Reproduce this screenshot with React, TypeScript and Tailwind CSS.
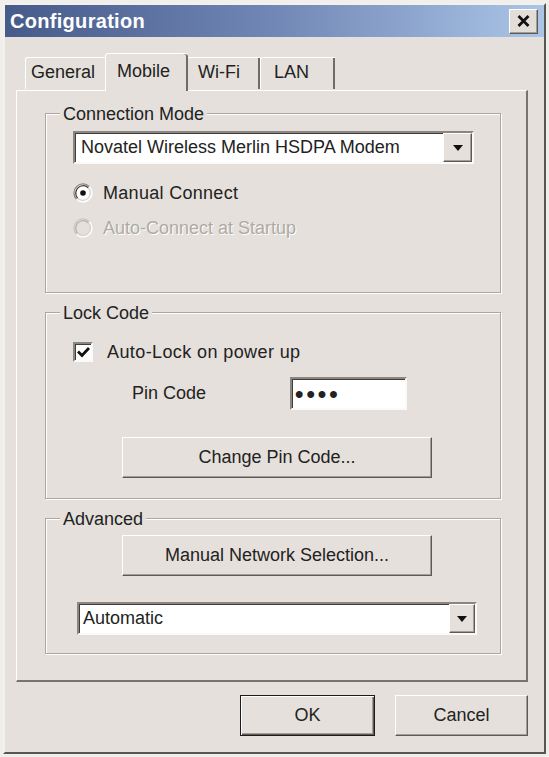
import { ReactNode } from "react";

const raised =
  "border border-t-white border-l-white border-r-[#5d5a55] border-b-[#5d5a55] shadow-[inset_-1px_-1px_0_#a29e97]";
const sunken =
  "border-2 border-t-[#8b8680] border-l-[#8b8680] border-r-[#fbfaf9] border-b-[#fbfaf9] shadow-[inset_1px_1px_0_#403e3b] bg-white";

function DropArrow() {
  return (
    <svg width="10" height="6" viewBox="0 0 10 6">
      <polygon points="0,0 10,0 5,6" fill="#111" />
    </svg>
  );
}

function Combo({ value, width, textPad, btnWidth }: { value: string; width: string; textPad: string; btnWidth: string }) {
  return (
    <div className={`${sunken} ${width} h-[33px] flex items-center`}>
      <span className={`flex-1 ${textPad} whitespace-nowrap`}>{value}</span>
      <span className={`${raised} ${btnWidth} h-full flex items-center justify-center bg-[#e5e0db]`}>
        <DropArrow />
      </span>
    </div>
  );
}

function Radio({ checked, disabled }: { checked?: boolean; disabled?: boolean }) {
  const outer = disabled ? "#c9c5bf" : "#8b8680";
  const inner = disabled ? "#b5b1ab" : "#403e3b";
  return (
    <svg width="20" height="20" viewBox="0 0 20 20">
      <circle cx="10" cy="10" r="8.5" fill={disabled ? "#e5e0db" : "#fff"} />
      <path d="M3.6 16.4 A9 9 0 0 1 16.4 3.6" fill="none" stroke={outer} strokeWidth="1.3" />
      <path d="M4.7 15.3 A7.5 7.5 0 0 1 15.3 4.7" fill="none" stroke={inner} strokeWidth="1.3" />
      <path d="M16.4 3.6 A9 9 0 0 1 3.6 16.4" fill="none" stroke="#fff" strokeWidth="1.3" />
      <path d="M15.3 4.7 A7.5 7.5 0 0 1 4.7 15.3" fill="none" stroke="#d8d3cd" strokeWidth="1.3" />
      {checked && <circle cx="10" cy="10" r="2.8" fill="#111" />}
    </svg>
  );
}

function Checkbox() {
  return (
    <span className={`${sunken} w-[20px] h-[20px] flex items-center justify-center`}>
      <svg width="13" height="12" viewBox="0 0 13 12">
        <path d="M1 5.5 L5 9.5 L12 2" fill="none" stroke="#111" strokeWidth="2.8" />
      </svg>
    </span>
  );
}

function Group({ title, height, top, children }: { title: string; height: string; top: string; children: ReactNode }) {
  return (
    <div
      className={`relative ml-[28px] ${top} w-[456px] ${height} border border-[#aba69e] shadow-[inset_1px_1px_0_#fff,1px_1px_0_#fff] flex flex-col`}
    >
      <span className="absolute left-[14px] -top-[11px] px-[3px] bg-[#e5e0db] leading-[22px]">{title}</span>
      {children}
    </div>
  );
}

function Button({ label, width, isDefault }: { label: string; width: string; isDefault?: boolean }) {
  return (
    <div
      className={`${width} h-[41px] flex items-center justify-center bg-[#e5e0db] ${
        isDefault
          ? "border border-[#1c1c1c] shadow-[inset_1px_1px_0_#fff,inset_-1px_-1px_0_#5d5a55,inset_-2px_-2px_0_#a29e97]"
          : raised
      }`}
    >
      {label}
    </div>
  );
}

export default function App() {
  return (
    <div className="w-[549px] h-[757px] bg-[#f1efec] pt-[3px] pl-[3px] font-['Liberation_Sans',Arial,sans-serif] text-[18px] text-[#222]">
      <div className="w-[543px] h-[751px] flex flex-col bg-[#e5e0db] border-2 border-t-[#f3f1ee] border-l-[#f3f1ee] border-r-[#5a5753] border-b-[#5a5753]">
        {/* Title bar */}
        <div className="h-[32px] flex items-center justify-between bg-linear-to-r from-[#475b8a] via-[#7187b5] to-[#abc5e7]">
          <span className="pl-[5px] text-white font-bold text-[20px] tracking-[0.3px]">Configuration</span>
          <span className={`${raised} mr-[6px] w-[29px] h-[25px] flex items-center justify-center bg-[#e2ddd7]`}>
            <svg width="13" height="12" viewBox="0 0 13 12">
              <path d="M1.5 1 L11.5 11 M11.5 1 L1.5 11" stroke="#111" strokeWidth="2.8" />
            </svg>
          </span>
        </div>

        <div className="flex flex-col pl-[11px]">
          {/* Tabs */}
          <div className="mt-[16px] h-[37px] flex items-end pl-[9px]">
            <div className="w-[80px] h-[32px] pl-[5px] pt-[1px] border-t border-l border-white rounded-tl-[3px] mb-[1px]">
              General
            </div>
            <div className="relative z-10 w-[83px] h-[38px] -mb-[1px] pl-[11px] pt-[4px] bg-[#e5e0db] border-t border-l border-white rounded-t-[3px] shadow-[inset_-2px_0_0_#6f6b66]">
              Mobile
            </div>
            <div className="w-[72px] h-[32px] pl-[10px] pt-[1px] border-t border-white shadow-[inset_-2px_0_0_#6f6b66] mb-[1px]">
              Wi-Fi
            </div>
            <div className="w-[75px] h-[32px] pl-[13px] pt-[1px] border-t border-l border-white rounded-tl-[3px] shadow-[inset_-2px_0_0_#6f6b66] mb-[1px]">
              LAN
            </div>
          </div>

          {/* Tab panel */}
          <div className="w-[512px] h-[592px] flex flex-col border-t border-l border-white border-r-2 border-b-2 border-r-[#77736e] border-b-[#77736e]">
            <Group title="Connection Mode" height="h-[180px]" top="mt-[22px]">
              <div className="ml-[27px] mt-[17px]">
                <Combo value="Novatel Wireless Merlin HSDPA Modem" width="w-[401px]" textPad="pl-[6px]" btnWidth="w-[29px]" />
              </div>
              <div className="ml-[27px] mt-[18px] h-[22px] flex items-center gap-[10px]">
                <Radio checked />
                <span className="tracking-[0.3px]">Manual Connect</span>
              </div>
              <div className="ml-[27px] mt-[13px] h-[22px] flex items-center gap-[10px] text-[#aeaaa4] [text-shadow:1px_1px_0_#fff]">
                <Radio disabled />
                <span>Auto-Connect at Startup</span>
              </div>
            </Group>

            <Group title="Lock Code" height="h-[187px]" top="mt-[19px]">
              <div className="ml-[27px] mt-[29px] h-[20px] flex items-center gap-[14px]">
                <Checkbox />
                <span className="tracking-[0.4px]">Auto-Lock on power up</span>
              </div>
              <div className="mt-[15px] h-[33px] flex items-center">
                <span className="ml-[86px] w-[158px]">Pin Code</span>
                <div className={`${sunken} w-[117px] h-[33px] flex items-center pl-[3px]`}>
                  <span className="font-bold text-[24px] leading-none tracking-[3px]">••••</span>
                </div>
              </div>
              <div className="ml-[76px] mt-[27px]">
                <Button label="Change Pin Code..." width="w-[310px]" />
              </div>
            </Group>

            <Group title="Advanced" height="h-[136px]" top="mt-[19px]">
              <div className="ml-[76px] mt-[16px]">
                <Button label="Manual Network Selection..." width="w-[310px]" />
              </div>
              <div className="ml-[31px] mt-[26px]">
                <Combo value="Automatic" width="w-[400px]" textPad="pl-[4px]" btnWidth="w-[26px]" />
              </div>
            </Group>
          </div>

          {/* Dialog buttons */}
          <div className="w-[512px] mt-[13px] flex justify-end gap-[20px]">
            <Button label="OK" width="w-[135px]" isDefault />
            <Button label="Cancel" width="w-[133px]" />
          </div>
        </div>
      </div>
    </div>
  );
}
